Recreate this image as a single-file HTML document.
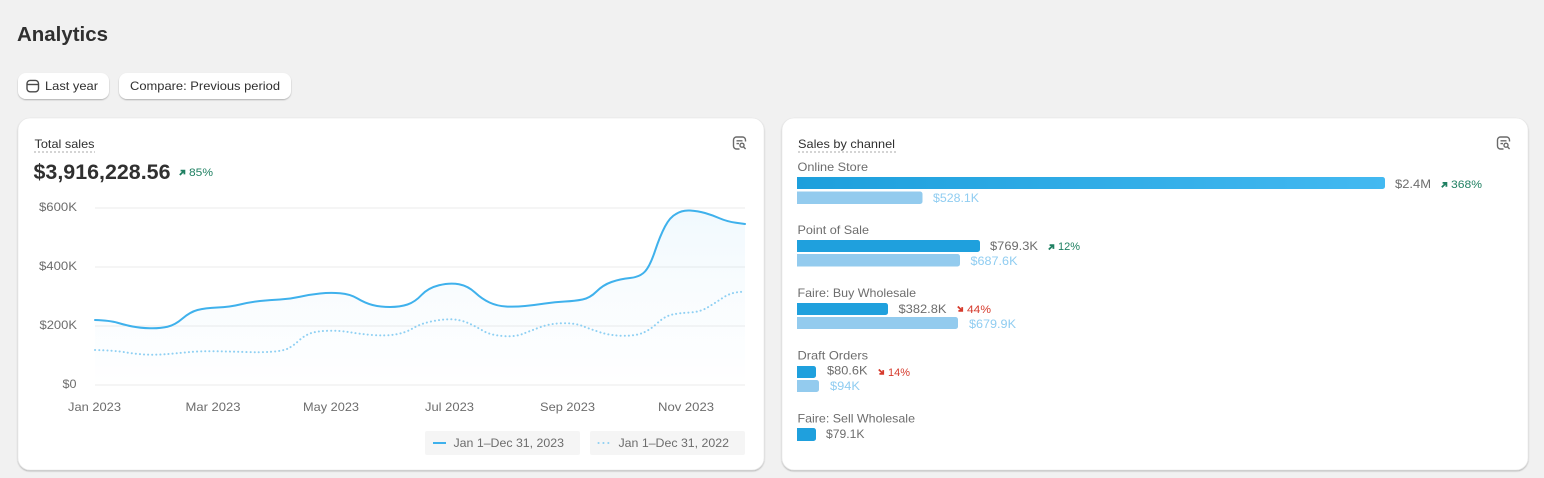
<!DOCTYPE html>
<html><head><meta charset="utf-8"><title>Analytics</title>
<style>
html,body{margin:0;padding:0;background:#f1f1f1;width:1544px;height:478px;overflow:hidden}
svg{display:block}
text{font-family:"Liberation Sans",sans-serif;font-size:12px;fill:#6d6d6d}
.d{fill:#303030}
.g{fill:#1f8062;font-size:11px}
.r{fill:#d63a2c;font-size:11px}
.l{fill:#90cdf1}
</style></head><body>
<svg width="1544" height="478" viewBox="0 0 1544 478" xmlns="http://www.w3.org/2000/svg">
<defs>
<linearGradient id="bar" x1="0" x2="1" y1="0" y2="0"><stop offset="0" stop-color="#1d9fdc"/><stop offset="1" stop-color="#43b9f1"/></linearGradient>
<linearGradient id="area" gradientUnits="userSpaceOnUse" x1="0" x2="0" y1="210" y2="385"><stop offset="0" stop-color="#3aa8ee" stop-opacity=".07"/><stop offset=".5" stop-color="#3aa8ee" stop-opacity=".03"/><stop offset=".85" stop-color="#3aa8ee" stop-opacity=".012"/><stop offset="1" stop-color="#3aa8ee" stop-opacity="0"/></linearGradient>
<filter id="sh" x="-5%" y="-20%" width="110%" height="140%"><feDropShadow dx="0" dy="1" stdDeviation="0.7" flood-color="#000" flood-opacity=".28"/></filter>
</defs>

<text x="17" y="41" class="d" style="font-size:20px;font-weight:bold" textLength="91" lengthAdjust="spacingAndGlyphs">Analytics</text>

<rect x="18" y="73" width="91" height="26" rx="8" fill="#fff" filter="url(#sh)"/>
<rect x="119" y="73" width="172" height="26" rx="8" fill="#fff" filter="url(#sh)"/>
<g fill="none" stroke="#4a4a4a" stroke-width="1.4"><rect x="27" y="80.4" width="11.5" height="11.4" rx="3.2"/><path d="M27 84.5H38.5"/></g>
<text x="45" y="90" class="d" textLength="53" lengthAdjust="spacingAndGlyphs">Last year</text>
<text x="130" y="90" class="d" textLength="150" lengthAdjust="spacingAndGlyphs">Compare: Previous period</text>

<rect x="18" y="118" width="746" height="352" rx="12" fill="#fff" stroke="#e6e6e6" stroke-width=".6" filter="url(#sh)"/>
<rect x="782" y="118" width="746" height="352" rx="12" fill="#fff" stroke="#e6e6e6" stroke-width=".6" filter="url(#sh)"/>

<!-- left card head -->
<text x="34.5" y="148" class="d" textLength="60" lengthAdjust="spacingAndGlyphs">Total sales</text>
<path d="M34 152H95" stroke="#a8a8a8" stroke-width="1" stroke-dasharray="2 2" fill="none"/>
<text x="33.5" y="179" class="d" style="font-size:21px;font-weight:bold" textLength="137" lengthAdjust="spacingAndGlyphs">$3,916,228.56</text>
<path d="M179.8 175L183.6 171.2M180.6 170.6H184.4V174.4" fill="none" stroke="#1f8062" stroke-width="1.8"/>
<text x="189" y="176" class="g" textLength="24" lengthAdjust="spacingAndGlyphs">85%</text>

<g id="ic" fill="none" stroke="#6a6a6a" stroke-width="1.4">
<path d="M739.5 149H736.5A3 3 0 0 1 733.500 146V140A3 3 0 0 1 736.500 137H742.500A3 3 0 0 1 745.500 140V141.500"/>
<path d="M736.500 140.800H742.500M736.500 143.600H739"/>
<circle cx="742" cy="145.200" r="2"/><path d="M743.500 146.800L745.600 149"/>
</g>
<use href="#ic" x="764"/>

<!-- grid -->
<g stroke="#f2f2f2" stroke-width="1.6"><path d="M95 208H745M95 267H745M95 326H745M95 385H745"/></g>
<text x="39" y="211" textLength="38" lengthAdjust="spacingAndGlyphs">$600K</text>
<text x="39" y="270" textLength="38" lengthAdjust="spacingAndGlyphs">$400K</text>
<text x="39.5" y="329" textLength="37.5" lengthAdjust="spacingAndGlyphs">$200K</text>
<text x="62.5" y="388" textLength="14" lengthAdjust="spacingAndGlyphs">$0</text>
<text x="68" y="411" textLength="53" lengthAdjust="spacingAndGlyphs">Jan 2023</text>
<text x="185.5" y="411" textLength="55" lengthAdjust="spacingAndGlyphs">Mar 2023</text>
<text x="303" y="411" textLength="56" lengthAdjust="spacingAndGlyphs">May 2023</text>
<text x="425" y="411" textLength="49" lengthAdjust="spacingAndGlyphs">Jul 2023</text>
<text x="540" y="411" textLength="55" lengthAdjust="spacingAndGlyphs">Sep 2023</text>
<text x="658" y="411" textLength="56" lengthAdjust="spacingAndGlyphs">Nov 2023</text>

<!-- area -->
<path fill="url(#area)" d="M95 320Q110 320.5 117.5 322.75Q125 325 132.5 326.5Q140 328 150 328.25Q160 328.5 167.5 326.75Q175 325 182.5 318.5Q190 312 197.5 310Q205 308 217.5 307.5Q230 307 240 304.5Q250 302 260 301Q270 300 280 299.5Q290 299 300 296.75Q310 294.5 320 293.5Q330 292.5 340 293.25Q350 294 357.5 298.5Q365 303 372.5 305Q380 307 390 307Q400 307 407.5 304.5Q415 302 421.5 295Q428 288 439 285.25Q450 282.5 459 284.25Q468 286 475 292.5Q482 299 489.5 302.5Q497 306 506 306.5Q515 307 525 306Q535 305 545 303.5Q555 302 565 301.5Q575 301 582.5 299.5Q590 298 596.5 291.5Q603 285 611.5 282Q620 279 630 278Q640 277 645 271.5Q650 266 655 251Q660 236 665 226.5Q670 217 676 214Q682 210 690 210.5Q698 211 705 213Q712 215 719.5 218.25Q727 221.5 736 222.75L745 224V385H95Z"/>

<!-- dotted line -->
<path fill="none" stroke="#8fd0f3" stroke-width="2" stroke-linecap="round" stroke-dasharray="0.1 4" d="M95 350Q115 350.5 125 352.25Q135 354 145 354.5Q155 355 165 354.25Q175 353.5 187.5 352.25Q200 351 215 351.25Q230 351.5 245 352Q260 352.5 271.5 351.75Q283 351 288 348.5Q293 346 299 340.5Q305 335 311.5 333Q318 331 329 330.75Q340 330.5 350 332.25Q360 334 372.5 335Q385 336 395 334.5Q405 333 412.5 328.5Q420 324 430 321.75Q440 319.5 450 319.25Q460 319.5 467.5 322.75Q475 326 482.5 330.5Q490 335 502.5 336Q515 337 522.5 334Q530 331 540 327.25Q550 323.5 562.5 323.25Q575 323 582.5 326Q590 329 600 332.25Q610 335.5 622.5 335.75Q635 336 642.5 333Q650 330 657.5 323Q665 316 672.5 314.5Q680 313 690 312.5Q700 312 707.5 307.5Q715 303 722.5 298Q730 293 737.5 292.25L745 291.5"/>

<!-- main line -->
<path fill="none" stroke="#3fb1ec" stroke-width="2" stroke-linecap="round" d="M95 320Q110 320.5 117.5 322.75Q125 325 132.5 326.5Q140 328 150 328.25Q160 328.5 167.5 326.75Q175 325 182.5 318.5Q190 312 197.5 310Q205 308 217.5 307.5Q230 307 240 304.5Q250 302 260 301Q270 300 280 299.5Q290 299 300 296.75Q310 294.5 320 293.5Q330 292.5 340 293.25Q350 294 357.5 298.5Q365 303 372.5 305Q380 307 390 307Q400 307 407.5 304.5Q415 302 421.5 295Q428 288 439 285.25Q450 282.5 459 284.25Q468 286 475 292.5Q482 299 489.5 302.5Q497 306 506 306.5Q515 307 525 306Q535 305 545 303.5Q555 302 565 301.5Q575 301 582.5 299.5Q590 298 596.5 291.5Q603 285 611.5 282Q620 279 630 278Q640 277 645 271.5Q650 266 655 251Q660 236 665 226.5Q670 217 676 214Q682 210 690 210.5Q698 211 705 213Q712 215 719.5 218.25Q727 221.5 736 222.75L745 224"/>

<!-- legend -->
<rect x="425" y="431" width="155" height="24" rx="2" fill="#f5f5f5"/>
<rect x="590" y="431" width="155" height="24" rx="2" fill="#f5f5f5"/>
<path d="M433 443H446" stroke="#3fb1ec" stroke-width="2" fill="none"/>
<path d="M598.5 443H611" stroke="#8fd0f3" stroke-width="2" stroke-linecap="round" stroke-dasharray="0.1 4.8" fill="none"/>
<text x="453.5" y="447" textLength="110.5" lengthAdjust="spacingAndGlyphs">Jan 1–Dec 31, 2023</text>
<text x="618.5" y="447" textLength="110.5" lengthAdjust="spacingAndGlyphs">Jan 1–Dec 31, 2022</text>

<!-- right card -->
<text x="798" y="148" class="d" textLength="97" lengthAdjust="spacingAndGlyphs">Sales by channel</text>
<path d="M798 152H896" stroke="#a8a8a8" stroke-width="1" stroke-dasharray="2 2" fill="none"/>

<text x="797.5" y="171" textLength="70.5" lengthAdjust="spacingAndGlyphs">Online Store</text>
<path d="M797 177H1382.500A2.500 2.500 0 0 1 1385 179.500V186.500A2.500 2.500 0 0 1 1382.500 189H797Z" fill="url(#bar)"/>
<path d="M797 191.500H920A2.500 2.500 0 0 1 922.500 194V201.500A2.500 2.500 0 0 1 920 204H797Z" fill="#93cbee"/>
<text x="1395" y="188" textLength="36" lengthAdjust="spacingAndGlyphs">$2.4M</text>
<path d="M1441.800 187.300L1445.600 183.500M1442.600 182.900H1446.400V186.700" fill="none" stroke="#1f8062" stroke-width="1.800"/>
<text x="1451" y="188" class="g" textLength="31" lengthAdjust="spacingAndGlyphs">368%</text>
<text x="933" y="202" class="l" textLength="46" lengthAdjust="spacingAndGlyphs">$528.1K</text>

<text x="797.500" y="234" textLength="71.500" lengthAdjust="spacingAndGlyphs">Point of Sale</text>
<path d="M797 240H977.500A2.500 2.500 0 0 1 980 242.500V249.500A2.500 2.500 0 0 1 977.500 252H797Z" fill="#1fa0dd"/>
<path d="M797 254H957.500A2.500 2.500 0 0 1 960 256.500V264A2.500 2.500 0 0 1 957.500 266.500H797Z" fill="#93cbee"/>
<text x="990" y="250" textLength="48" lengthAdjust="spacingAndGlyphs">$769.3K</text>
<path d="M1048.800 249.500L1052.600 245.700M1049.600 245.100H1053.400V248.900" fill="none" stroke="#1f8062" stroke-width="1.800"/>
<text x="1058" y="250" class="g" textLength="22" lengthAdjust="spacingAndGlyphs">12%</text>
<text x="970.500" y="265" class="l" textLength="47" lengthAdjust="spacingAndGlyphs">$687.6K</text>

<text x="797.500" y="297" textLength="118.500" lengthAdjust="spacingAndGlyphs">Faire: Buy Wholesale</text>
<path d="M797 303H885.500A2.500 2.500 0 0 1 888 305.500V312.500A2.500 2.500 0 0 1 885.500 315H797Z" fill="#1fa0dd"/>
<path d="M797 317H955.500A2.500 2.500 0 0 1 958 319.500V326.500A2.500 2.500 0 0 1 955.500 329H797Z" fill="#93cbee"/>
<text x="898.500" y="313" textLength="48" lengthAdjust="spacingAndGlyphs">$382.8K</text>
<path d="M957.800 306.500L961.600 310.300M962.200 307.100V310.900H958.400" fill="none" stroke="#d63a2c" stroke-width="1.800"/>
<text x="967" y="313" class="r" textLength="24" lengthAdjust="spacingAndGlyphs">44%</text>
<text x="969" y="328" class="l" textLength="47" lengthAdjust="spacingAndGlyphs">$679.9K</text>

<text x="797.500" y="359.500" textLength="70.500" lengthAdjust="spacingAndGlyphs">Draft Orders</text>
<path d="M797 366H813.500A2.500 2.500 0 0 1 816 368.500V375.500A2.500 2.500 0 0 1 813.500 378H797Z" fill="#1fa0dd"/>
<path d="M797 380H816.500A2.500 2.500 0 0 1 819 382.500V389.500A2.500 2.500 0 0 1 816.500 392H797Z" fill="#93cbee"/>
<text x="827" y="374.500" textLength="40.500" lengthAdjust="spacingAndGlyphs">$80.6K</text>
<path d="M878.800 369.500L882.600 373.300M883.200 370.100V373.900H879.400" fill="none" stroke="#d63a2c" stroke-width="1.800"/>
<text x="888" y="376" class="r" textLength="22" lengthAdjust="spacingAndGlyphs">14%</text>
<text x="830" y="390" class="l" textLength="30" lengthAdjust="spacingAndGlyphs">$94K</text>

<text x="797.500" y="422.500" textLength="117.500" lengthAdjust="spacingAndGlyphs">Faire: Sell Wholesale</text>
<path d="M797 428H813.500A2.500 2.500 0 0 1 816 430.500V438.500A2.500 2.500 0 0 1 813.500 441H797Z" fill="#1fa0dd"/>
<text x="826" y="438" textLength="38.500" lengthAdjust="spacingAndGlyphs">$79.1K</text>
</svg>
</body></html>
